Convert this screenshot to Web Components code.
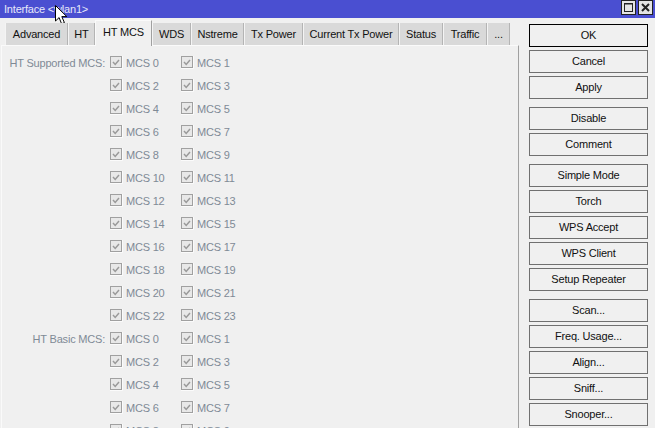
<!DOCTYPE html>
<html>
<head>
<meta charset="utf-8">
<title>Interface</title>
<style>
  html, body { margin: 0; height: 428px; overflow: hidden; background: #f0f0f0; }
  body { font: 11px "Liberation Sans", Arial, sans-serif; letter-spacing: -0.2px; color: #111; }
</style>
</head>
<body>
<win-dialog title-text="Interface &lt;wlan1&gt;">
  <tab-strip slot="tabs" active="HT MCS" tabs="Advanced:63,HT:27,HT MCS:57,WDS:39,Nstreme:53,Tx Power:59,Current Tx Power:96,Status:44,Traffic:44,...:23"></tab-strip>
  <mcs-form slot="panel"></mcs-form>
  <button-column slot="actions" groups="OK,Cancel,Apply|Disable,Comment|Simple Mode,Torch,WPS Accept,WPS Client,Setup Repeater|Scan...,Freq. Usage...,Align...,Sniff...,Snooper..."></button-column>
</win-dialog>

<script>
class WinDialog extends HTMLElement {
    connectedCallback() {
        const title = this.getAttribute('title-text');
        this.attachShadow({ mode: 'open' });
        this.shadowRoot.innerHTML = `
            <style>
                :host { display: block; position: relative; width: 655px; height: 428px; overflow: hidden; }
                .bar { height: 18px; background: #4a4fd1; color: #e6e8fa; display: flex; align-items: flex-start; padding: 0 2px 0 4px; gap: 2px; }
                .name { flex: 1; line-height: 18px; }
                .ctl { width: 15px; height: 15px; display: block; }
                .body { display: flex; height: 410px; }
                .left { width: 519px; flex: none; padding-left: 1px; box-sizing: border-box; }
                .right { padding: 6px 0 0 10px; }
                .cursor { position: absolute; left: 55px; top: 5px; }
            </style>
            <div class="bar">
                <span class="name">${title.replace('<', '&lt;')}</span>
                <svg class="ctl" viewBox="0 0 15 15"><rect x=".5" y=".5" width="14" height="14" fill="#e4e4e4" stroke="#222"/><rect x="3.5" y="3.5" width="8" height="8" fill="none" stroke="#222"/><path d="M3 4h9" stroke="#222"/></svg>
                <svg class="ctl" viewBox="0 0 15 15"><rect x=".5" y=".5" width="14" height="14" fill="#e4e4e4" stroke="#222"/><path d="M4 4l7 7M11 4l-7 7" stroke="#222" stroke-width="2"/></svg>
            </div>
            <div class="body">
                <div class="left">
                    <slot name="tabs"></slot>
                    <slot name="panel"></slot>
                </div>
                <div class="right"><slot name="actions"></slot></div>
            </div>
            <svg class="cursor" width="13" height="20" viewBox="0 0 13 20">
                <path d="M.5.5v15.5l3.6-3.4 2.5 6.2 2.8-1.2-2.6-6h5z" fill="#fff" stroke="#000" stroke-width="1"/>
            </svg>
        `;
    }
}

class TabStrip extends HTMLElement {
    connectedCallback() {
        const active = this.getAttribute('active');
        const tabs = this.getAttribute('tabs').split(',').map(t => t.split(':'));
        this.attachShadow({ mode: 'open' });
        this.shadowRoot.innerHTML = `
            <style>
                :host { display: flex; align-items: flex-end; height: 28px; padding-left: 4px; position: relative; z-index: 1; }
                .tab { height: 22px; margin-bottom: 1px; box-sizing: border-box; background: #d9d9d9; border-right: 1px solid #b4b4b4; border-left: 1px solid #f4f4f4;
                       line-height: 23px; text-align: center; white-space: nowrap; color: #111; flex: none; }
                .on { height: 26px; margin-bottom: 0; background: #f0f0f0; border: 1px solid #fafafa; border-right-color: #a0a0a0; border-bottom: 0; line-height: 23px; }
            </style>
            ${tabs.map(([t, w]) => `<div class="tab ${t === active ? 'on' : ''}" style="width:${w}px">${t}</div>`).join('')}
        `;
    }
}

class McsCheck extends HTMLElement {
    connectedCallback() {
        const label = this.getAttribute('label');
        this.attachShadow({ mode: 'open' });
        this.shadowRoot.innerHTML = `
            <style>
                :host { display: flex; align-items: center; gap: 3px; color: #7f8a96; }
                svg { display: block; flex: none; }
            </style>
            <svg width="13" height="13" viewBox="0 0 13 13">
                <path d="M12.5 0v12.5H0" fill="none" stroke="#fbfbfb"/>
                <rect x=".5" y=".5" width="11" height="11" fill="#e8e8e8" stroke="#a0a0a0"/>
                <path d="M3 6l2.2 2.4L9 4" fill="none" stroke="#9a9a9a" stroke-width="1.5"/>
            </svg>
            <span>${label}</span>
        `;
    }
}

class McsForm extends HTMLElement {
    connectedCallback() {
        this.attachShadow({ mode: 'open' });
        const section = (title, count) => {
            let html = '';
            for (let i = 0; i < count; i += 2) {
                html += `<div class="lbl">${i === 0 ? title : ''}</div>
                    <mcs-check label="MCS ${i}"></mcs-check>
                    <mcs-check label="MCS ${i + 1}"></mcs-check>`;
            }
            return html;
        };
        this.shadowRoot.innerHTML = `
            <style>
                :host { display: block; height: 383px; box-sizing: border-box; border: 1px solid #fafafa; border-right-color: #a0a0a0; border-bottom: 0; overflow: hidden; margin-top: -1px; }
                .grid { display: grid; grid-template-columns: 104px 71px 71px; grid-auto-rows: 23px; padding: 5px 0 0 4px; align-items: center; height: 600px; align-content: start; }
                .lbl { color: #7f8a96; text-align: right; padding-right: 5px; white-space: nowrap; }
            </style>
            <div class="grid">${section('HT Supported MCS:', 24)}${section('HT Basic MCS:', 10)}</div>
        `;
    }
}

class WinButton extends HTMLElement {
    connectedCallback() {
        this.attachShadow({ mode: 'open' });
        this.shadowRoot.innerHTML = `
            <style>
                :host { display: block; width: 119px; height: 23px; box-sizing: border-box; border: 1px solid #707070; background: #f0f0f0;
                        text-align: center; line-height: 21px; color: #111; }
                :host([primary]) { border-color: #000; }
            </style>
            <slot></slot>
        `;
    }
}

class ButtonColumn extends HTMLElement {
    connectedCallback() {
        const groups = this.getAttribute('groups').split('|').map(g => g.split(','));
        this.attachShadow({ mode: 'open' });
        this.shadowRoot.innerHTML = `
            <style>
                :host { display: flex; flex-direction: column; gap: 8px; }
                .group { display: flex; flex-direction: column; gap: 3px; }
            </style>
            ${groups.map(g => `<div class="group">${g.map(b => `<win-button ${b === 'OK' ? 'primary' : ''}>${b}</win-button>`).join('')}</div>`).join('')}
        `;
    }
}

customElements.define('win-dialog', WinDialog);
customElements.define('tab-strip', TabStrip);
customElements.define('mcs-check', McsCheck);
customElements.define('mcs-form', McsForm);
customElements.define('win-button', WinButton);
customElements.define('button-column', ButtonColumn);
</script>
</body>
</html>
